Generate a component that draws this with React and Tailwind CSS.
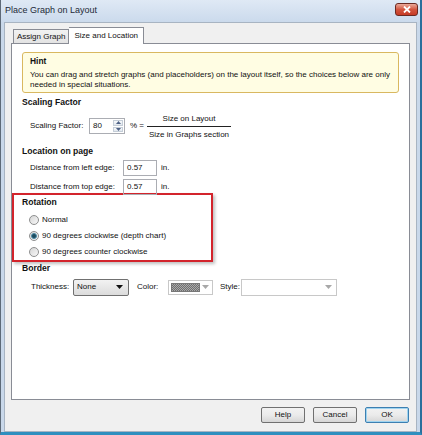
const font = "font-['Liberation_Sans',Arial,sans-serif]";

function Radio({ checked, label }) {
  return (
    <div className="flex items-center h-[16px]">
      <span className="w-[10px] h-[10px] rounded-full border border-[#8e8f8f] bg-gradient-to-br from-[#d6d6d6] to-[#f8f8f8] flex items-center justify-center">
        {checked && <span className="w-[6px] h-[6px] rounded-full bg-[#1e4b5e] border border-[#4a8aa6]" />}
      </span>
      <span className="ml-[3px]">{label}</span>
    </div>
  );
}

function Button({ children, primary }) {
  return (
    <button
      className={`w-[44px] h-[16px] rounded-[2px] border ${
        primary ? 'border-[#3c7fb1] shadow-[inset_0_0_0_1px_#9fd4f0]' : 'border-[#707070]'
      } bg-gradient-to-b from-[#f2f2f2] via-[#ebebeb] to-[#d6d6d6] text-[8px] text-[#111] leading-none`}
    >
      {children}
    </button>
  );
}

function Arrow({ light }) {
  return (
    <svg width="7" height="4" viewBox="0 0 7 4">
      <path d="M0 0h7L3.5 4z" fill={light ? '#a8a8a8' : '#111'} />
    </svg>
  );
}

export default function App() {
  return (
    <div className={`w-[422px] h-[435px] ${font} text-[8px] text-[#111] flex flex-col bg-[#c9d8ea] border-l border-[#5e6a78] border-b-[3px] border-b-[#2f8fbf] border-r-[2px] border-r-[#2a6f9c] overflow-hidden`}>
      <div className="h-[22px] flex items-center justify-between pl-[4px] pr-[2px] bg-gradient-to-b from-[#dfe9f5] to-[#cbdaec]">
        <span className="text-[9px] text-[#1e2a38]">Place Graph on Layout</span>
        <div className="w-[23px] h-[13px] mb-[3px] rounded-[3px] border border-[#6b2a22] bg-gradient-to-b from-[#e9a99a] via-[#d2553f] to-[#c63a25] flex items-center justify-center">
          <svg width="8" height="7" viewBox="0 0 8 7">
            <path d="M1 0.5l6 6M7 0.5l-6 6" stroke="#fff" strokeWidth="1.8" />
          </svg>
        </div>
      </div>

      <div className="flex-1 mx-[3px] bg-[#f0f0f0] border border-[#a8b4c2] flex flex-col px-[6px] pt-[3px]">
        {/* tabs */}
        <div className="flex items-end h-[17px] pl-[2px]">
          <div className="h-[14px] px-[3px] border border-b-0 border-[#898c95] bg-gradient-to-b from-[#f2f2f2] to-[#e3e3e3] flex items-center">
            Assign Graph
          </div>
          <div className="h-[17px] px-[5px] border border-b-0 border-l-0 border-[#898c95] bg-white flex items-start pt-[2px] -mb-px relative z-10">
            Size and Location
          </div>
        </div>

        <div className="h-[357px] border border-[#898c95] bg-white px-[10px] pt-[8px]">
          <div className="h-[41px] rounded-[3px] border border-[#d9b860] bg-[#fffde3] px-[7px] pt-[3px] leading-[10.5px] whitespace-nowrap">
            <div className="font-bold text-[8.4px] mb-[3px]">Hint</div>
            <div>You can drag and stretch graphs (and placeholders) on the layout itself, so the choices below are only</div>
            <div>needed in special situations.</div>
          </div>

          <div className="font-bold mt-[3px] h-[13px] leading-[13px] text-[8.6px]">Scaling Factor</div>
          <div className="flex items-center pl-[8px] h-[34px]">
            <span className="w-[59px]">Scaling Factor:</span>
            <div className="flex h-[16px] border border-[#abadb3]">
              <span className="w-[21px] pl-[3px] leading-[14px]">80</span>
              <div className="w-[12px] flex flex-col gap-px p-px ml-[1px]">
                <div className="flex-1 border border-[#c5ced8] bg-gradient-to-b from-[#f7f9fb] to-[#e1e7ee] flex items-center justify-center">
                  <svg width="5" height="3" viewBox="0 0 5 3"><path d="M0 3h5L2.5 0z" fill="#4d6185" /></svg>
                </div>
                <div className="flex-1 border border-[#c5ced8] bg-gradient-to-b from-[#f7f9fb] to-[#e1e7ee] flex items-center justify-center">
                  <svg width="5" height="3" viewBox="0 0 5 3"><path d="M0 0h5L2.5 3z" fill="#4d6185" /></svg>
                </div>
              </div>
            </div>
            <span className="ml-[5px]">% =</span>
            <div className="ml-[3px] flex flex-col items-center w-[84px]">
              <span className="leading-[11px] pb-[2px]">Size on Layout</span>
              <span className="w-full border-t border-[#222]" />
              <span className="leading-[11px] pt-[2px]">Size in Graphs section</span>
            </div>
          </div>

          <div className="font-bold h-[14px] leading-[14px] mt-[1px] text-[8.6px]">Location on page</div>
          <div className="flex items-center pl-[8px] h-[19px]">
            <span className="w-[93px]">Distance from left edge:</span>
            <span className="w-[34px] h-[16px] border border-[#abadb3] pl-[3px] leading-[14px]">0.57</span>
            <span className="ml-[4px]">in.</span>
          </div>
          <div className="flex items-center pl-[8px] h-[19px]">
            <span className="w-[93px]">Distance from top edge:</span>
            <span className="w-[34px] h-[16px] border border-[#abadb3] pl-[3px] leading-[14px]">0.57</span>
            <span className="ml-[4px]">in.</span>
          </div>

          <div className="-ml-[10px] -mt-[3px] w-[201px] h-[69px] border-2 border-[#d3242c] shadow-[2px_2px_3px_rgba(0,0,0,0.25)] pl-[8px] pt-[1px]">
            <div className="font-bold h-[13px] leading-[13px] text-[8.6px]">Rotation</div>
            <div className="pl-[7px] pt-[3px]">
              <Radio label="Normal" />
              <Radio checked label="90 degrees clockwise (depth chart)" />
              <Radio label="90 degrees counter clockwise" />
            </div>
          </div>

          <div className="font-bold h-[11px] leading-[11px] mt-[1px] text-[8.6px]">Border</div>
          <div className="flex items-center pl-[9px] h-[26px]">
            <span className="w-[42px]">Thickness:</span>
            <div className="w-[56px] h-[17px] rounded-[2px] border border-[#707070] bg-gradient-to-b from-[#f2f2f2] to-[#dcdcdc] flex items-center justify-between pl-[3px] pr-[5px]">
              <span>None</span>
              <Arrow />
            </div>
            <span className="ml-[8px] w-[31px]">Color:</span>
            <div className="w-[45px] h-[15px] border border-[#c8c8c8] bg-white flex items-center pl-[2px] pr-[3px] justify-between">
              <span className="w-[29px] h-[9px] border border-[#777] bg-[repeating-conic-gradient(#6f6f6f_0_25%,#a9a9a9_0_50%)] bg-[length:2px_2px]" />
              <Arrow light />
            </div>
            <span className="ml-[7px] w-[21px]">Style:</span>
            <div className="w-[96px] h-[17px] border border-[#c8c8c8] bg-white flex items-center justify-end pr-[4px]">
              <Arrow light />
            </div>
          </div>
        </div>

        <div className="flex justify-end gap-[8px] pr-[1px] pt-[7px]">
          <Button>Help</Button>
          <Button>Cancel</Button>
          <Button primary>OK</Button>
        </div>
      </div>
    </div>
  );
}
